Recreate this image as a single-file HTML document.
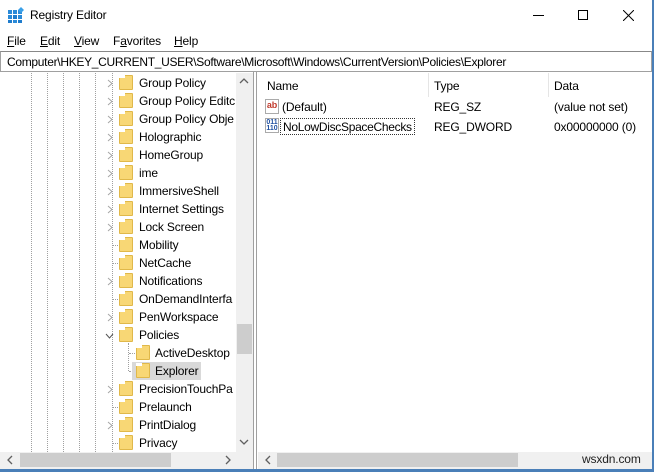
<!DOCTYPE html>
<html><head><style>
*{margin:0;padding:0;box-sizing:border-box}
body{width:654px;height:472px;background:#fff;font-family:"Liberation Sans",sans-serif;font-size:12px;letter-spacing:-0.15px;color:#000;position:relative;overflow:hidden}
.a{position:absolute;white-space:nowrap}
.row{position:absolute;height:18px;line-height:18px}
.fold{position:absolute;width:14px;height:15px;background:#f8d775;border:1px solid #e0b84a;border-radius:1px}
.fold:before{content:"";position:absolute;left:-1px;top:-1px;width:6px;height:3px;background:#fff}
.vd{position:absolute;width:0;border-left:1px dotted #a0a0a0}
.hd{position:absolute;height:0;border-top:1px dotted #a0a0a0}
u{text-decoration:underline}
</style></head><body>
<svg class="a" style="left:8px;top:7px" width="16" height="16" viewBox="0 0 16 16">
<rect x="0" y="3" width="4" height="4" fill="#2a8ad8"/><rect x="5" y="3" width="4" height="4" fill="#2a8ad8"/>
<rect x="0" y="8" width="4" height="4" fill="#2a8ad8"/><rect x="5" y="8" width="4" height="4" fill="#1f7ccc"/><rect x="10" y="8" width="4" height="4" fill="#2a8ad8"/>
<rect x="0" y="13" width="4" height="3" fill="#1f7ccc"/><rect x="5" y="13" width="4" height="3" fill="#2a8ad8"/><rect x="10" y="13" width="4" height="3" fill="#1f7ccc"/>
<rect x="10" y="3" width="4" height="4" fill="#2a8ad8"/>
<path d="M13 0 L16 3 L13 6 L10 3Z" fill="#3aa0e8"/></svg>
<div class="a" style="left:30px;top:8px;font-size:12px">Registry Editor</div>
<div class="a" style="left:533px;top:15px;width:11px;border-top:1px solid #000"></div>
<div class="a" style="left:578px;top:10px;width:10px;height:10px;border:1px solid #000"></div>
<svg class="a" style="left:623px;top:10px" width="11" height="11"><path d="M0 0L11 11M11 0L0 11" stroke="#000" stroke-width="1"/></svg>
<div class="a" style="left:7px;top:34px"><u>F</u>ile</div>
<div class="a" style="left:40px;top:34px"><u>E</u>dit</div>
<div class="a" style="left:74px;top:34px"><u>V</u>iew</div>
<div class="a" style="left:113px;top:34px">F<u>a</u>vorites</div>
<div class="a" style="left:174px;top:34px"><u>H</u>elp</div>
<div class="a" style="left:0;top:51px;width:652px;height:21px;border:1px solid #a0a0a0;border-top:1px solid #888;padding:3px 0 0 6px;font-size:12px;letter-spacing:-0.3px">Computer\HKEY_CURRENT_USER\Software\Microsoft\Windows\CurrentVersion\Policies\Explorer</div>
<div class="vd" style="left:31px;top:73px;height:379px"></div>
<div class="vd" style="left:47px;top:73px;height:379px"></div>
<div class="vd" style="left:63px;top:73px;height:379px"></div>
<div class="vd" style="left:79px;top:73px;height:379px"></div>
<div class="vd" style="left:95px;top:73px;height:379px"></div>
<div class="vd" style="left:112px;top:73px;height:379px"></div>
<div class="vd" style="left:128px;top:343px;height:28px"></div>
<div class="hd" style="left:113px;top:245px;width:5px"></div>
<div class="hd" style="left:113px;top:263px;width:5px"></div>
<div class="hd" style="left:113px;top:299px;width:5px"></div>
<div class="hd" style="left:113px;top:407px;width:5px"></div>
<div class="hd" style="left:113px;top:443px;width:5px"></div>
<div class="hd" style="left:129px;top:353px;width:6px"></div>
<div class="hd" style="left:129px;top:371px;width:6px"></div>
<div class="a" style="left:132px;top:362px;width:69px;height:18px;background:#d9d9d9"></div>
<div id="tree"></div>
<script>
var r=[["Group Policy",1],["Group Policy Editc",1],["Group Policy Obje",1],["Holographic",1],["HomeGroup",1],["ime",1],["ImmersiveShell",1],["Internet Settings",1],["Lock Screen",1],["Mobility",0],["NetCache",0],["Notifications",1],["OnDemandInterfa",0],["PenWorkspace",1],["Policies",2],["ActiveDesktop",3],["Explorer",3],["PrecisionTouchPa",1],["Prelaunch",0],["PrintDialog",1],["Privacy",0]];
var h="";
for(var i=0;i<r.length;i++){var y=74+i*18,s=r[i][1]==3,fx=s?136:119,tx=s?155:139;
if(r[i][1]==1)h+='<svg class="a" style="left:107px;top:'+(y+5)+'px" width="6" height="9"><path d="M1 1L5 4.5L1 8" stroke="#a6a6a6" fill="none"/></svg>';
if(r[i][1]==2)h+='<svg class="a" style="left:105px;top:'+(y+7)+'px" width="9" height="6"><path d="M1 1L4.5 5L8 1" stroke="#555" fill="none"/></svg>';
h+='<div class="fold" style="left:'+fx+'px;top:'+(y+1)+'px"></div><div class="row" style="left:'+tx+'px;top:'+y+'px">'+r[i][0]+'</div>';}
document.getElementById("tree").innerHTML=h;
</script>
<div class="a" style="left:236px;top:73px;width:17px;height:379px;background:#f0f0f0"></div>
<div class="a" style="left:237px;top:324px;width:15px;height:30px;background:#cdcdcd"></div>
<svg class="a" style="left:239px;top:78px" width="10" height="6"><path d="M1 5L5 1L9 5" stroke="#606060" stroke-width="1.3" fill="none"/></svg>
<svg class="a" style="left:239px;top:439px" width="10" height="6"><path d="M1 1L5 5L9 1" stroke="#606060" stroke-width="1.3" fill="none"/></svg>
<div class="a" style="left:0;top:452px;width:253px;height:17px;background:#f0f0f0"></div>
<div class="a" style="left:20px;top:453px;width:151px;height:14px;background:#cdcdcd"></div>
<svg class="a" style="left:7px;top:455px" width="6" height="10"><path d="M5 1L1 5L5 9" stroke="#606060" stroke-width="1.3" fill="none"/></svg>
<svg class="a" style="left:225px;top:455px" width="6" height="10"><path d="M1 1L5 5L1 9" stroke="#606060" stroke-width="1.3" fill="none"/></svg>
<div class="a" style="left:253px;top:72px;width:1px;height:397px;background:#a0a0a0"></div>
<div class="a" style="left:256px;top:72px;width:1px;height:397px;background:#a0a0a0"></div>
<div class="a" style="left:267px;top:79px">Name</div>
<div class="a" style="left:434px;top:79px">Type</div>
<div class="a" style="left:554px;top:79px">Data</div>
<div class="vd" style="left:428px;top:73px;height:24px;border-left:1px solid #e5e5e5"></div>
<div class="vd" style="left:548px;top:73px;height:24px;border-left:1px solid #e5e5e5"></div>
<div class="a" style="left:265px;top:99px;width:14px;height:15px;border:1px solid #aaa;background:#fff;font-size:9px;font-weight:bold;color:#c0392b;line-height:11px;text-align:center">ab</div>
<div class="a" style="left:282px;top:100px">(Default)</div>
<div class="a" style="left:434px;top:100px">REG_SZ</div>
<div class="a" style="left:554px;top:100px">(value not set)</div>
<div class="a" style="left:265px;top:118px;width:14px;height:15px;border:1px solid #aaa;background:#fff;font-size:7px;font-weight:bold;color:#1f4fa0;line-height:6px;text-align:center;padding-top:1px;letter-spacing:0">011<br>110</div>
<div class="a" style="left:280px;top:118px;height:17px;border:1px dotted #333;padding:1px 2px;letter-spacing:-0.3px">NoLowDiscSpaceChecks</div>
<div class="a" style="left:434px;top:120px">REG_DWORD</div>
<div class="a" style="left:554px;top:120px">0x00000000 (0)</div>
<div class="a" style="left:258px;top:452px;width:394px;height:17px;background:#f0f0f0"></div>
<div class="a" style="left:277px;top:453px;width:241px;height:14px;background:#cdcdcd"></div>
<svg class="a" style="left:265px;top:455px" width="6" height="10"><path d="M5 1L1 5L5 9" stroke="#606060" stroke-width="1.3" fill="none"/></svg>
<div class="a" style="left:582px;top:452px;font-size:12px;color:#222">wsxdn.com</div>
<div class="a" style="left:652px;top:0;width:2px;height:472px;background:#4a7fb8"></div>
<div class="a" style="left:0;top:469px;width:654px;height:3px;background:#4a7fb8"></div>
</body></html>
